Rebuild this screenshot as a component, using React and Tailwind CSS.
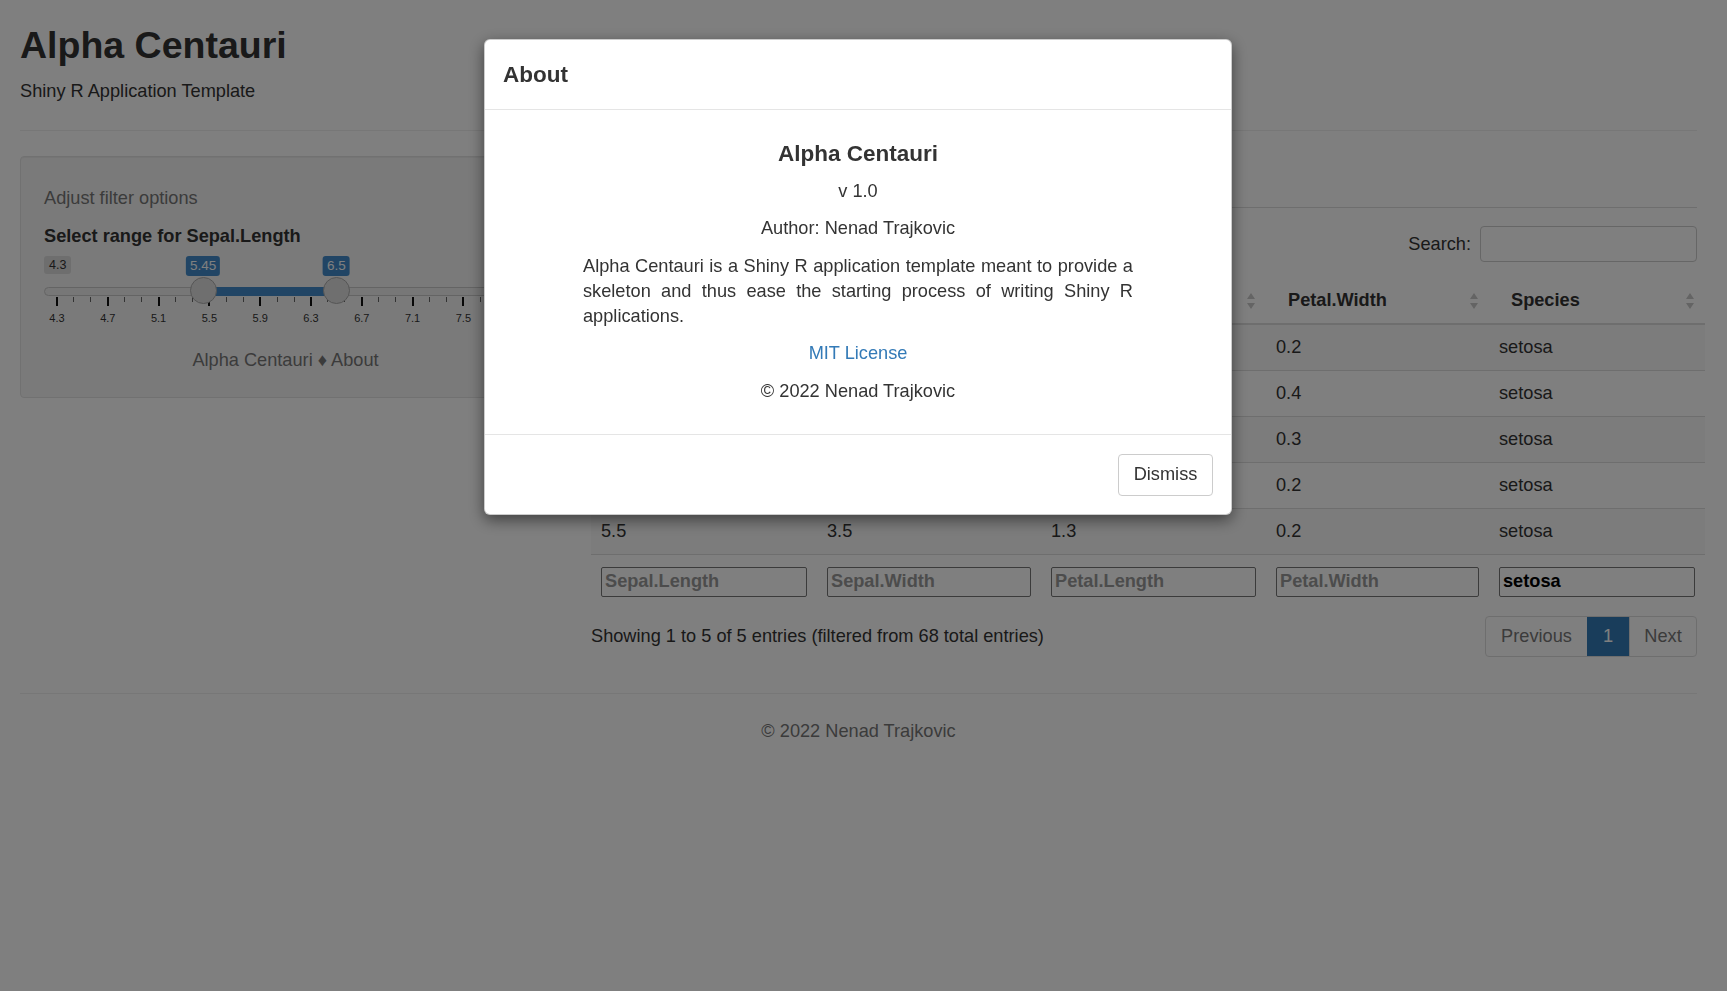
const rows = [
    ["5.8", "4.0", "1.2", "0.2", "setosa"],
    ["5.7", "4.4", "1.5", "0.4", "setosa"],
    ["5.7", "3.8", "1.7", "0.3", "setosa"],
    ["5.5", "4.2", "1.4", "0.2", "setosa"],
    ["5.5", "3.5", "1.3", "0.2", "setosa"],
];

const columns = [
    { name: "Sepal.Length", width: "w-[226px]" },
    { name: "Sepal.Width", width: "w-[224px]" },
    { name: "Petal.Length", width: "w-[225px]" },
    { name: "Petal.Width", width: "w-[223px]" },
    { name: "Species", width: "w-[216px]" },
];

// slider scale: 4.3 sits 13px in, 127px per unit
const MIN = 4.3;
const pos = (v) => 13 + (v - MIN) * 127;
const range = [5.45, 6.5];
const gridLabels = ["4.3", "4.7", "5.1", "5.5", "5.9", "6.3", "6.7", "7.1", "7.5", "7.9"];
const ticks = Array.from({ length: 28 }, (_, i) => ({ x: pos(MIN + (i * 0.4) / 3), major: i % 3 === 0 }));

function SortIcon() {
    return (
        <svg width="10" height="20" viewBox="0 0 10 20" className="shrink-0">
            <path d="M5 2 L9 8 L1 8 Z" fill="#c8c8c8" />
            <path d="M5 18 L9 12 L1 12 Z" fill="#c8c8c8" />
        </svg>
    );
}

function RangeSlider() {
    return (
        <div className="relative h-[80px] mt-[2px]">
            <span className="absolute left-0 top-[5px] h-[18px] px-[5px] rounded-[3px] bg-[#dcdcdc] text-[12.5px] leading-[18px] text-[#333]">4.3</span>
            {range.map((v) => (
                <span key={v} className="absolute top-[5px] -translate-x-1/2 h-[20px] px-[4px] rounded-[3px] bg-[#428bca] text-white text-[13.5px] leading-[20px]" style={{ left: pos(v) }}>
                    {v}
                </span>
            ))}
            <div className="absolute left-0 right-0 top-[36px] h-[9px] rounded-full bg-[#eeeeee] border border-[#c8c8c8]" />
            <div className="absolute top-[36px] h-[9px] bg-[#428bca]" style={{ left: pos(range[0]), width: pos(range[1]) - pos(range[0]) }} />
            {ticks.map((t, i) => (
                <div key={i} className={t.major ? "absolute top-[46px] w-[2px] h-[9px] bg-[#111]" : "absolute top-[46px] w-[1px] h-[5px] bg-[#666]"} style={{ left: t.x - (t.major ? 1 : 0.5) }} />
            ))}
            {gridLabels.map((l, i) => (
                <span key={l} className="absolute top-[60px] -translate-x-1/2 text-[11px] leading-[14px] text-[#333]" style={{ left: pos(MIN + i * 0.4) }}>
                    {l}
                </span>
            ))}
            {range.map((v) => (
                <div key={v} className="absolute top-[26px] w-[27px] h-[27px] rounded-full bg-[#dedede] border border-[#ababab]" style={{ left: pos(v) - 13.5 }} />
            ))}
        </div>
    );
}

function DataTable() {
    return (
        <div>
            <div className="flex justify-end items-center gap-[9px] mt-[18px]">
                <span>Search:</span>
                <input className="w-[217px] h-[36px] border border-[#ccc] rounded-[4px] bg-white" />
            </div>

            <table className="table-fixed border-collapse w-[1114px] mt-[16px] text-left">
                <colgroup>
                    {columns.map((c) => (
                        <col key={c.name} className={c.width} />
                    ))}
                </colgroup>
                <thead>
                    <tr className="h-[46px] border-b-2 border-[#ddd]">
                        {columns.map((c) => (
                            <th key={c.name} className="pl-[22px] pr-[10px] font-bold">
                                <div className="flex items-center justify-between">
                                    <span>{c.name}</span>
                                    <SortIcon />
                                </div>
                            </th>
                        ))}
                    </tr>
                </thead>
                <tbody>
                    {rows.map((row, i) => (
                        <tr key={i} className={i % 2 === 0 ? "h-[46px] border-t border-[#ddd] bg-[#f9f9f9]" : "h-[46px] border-t border-[#ddd]"}>
                            {row.map((cell, j) => (
                                <td key={j} className="px-[10px]">{cell}</td>
                            ))}
                        </tr>
                    ))}
                </tbody>
                <tfoot>
                    <tr className="border-t border-[#ddd]">
                        {columns.map((c) => (
                            <td key={c.name} className="px-[10px] pt-[12px] pb-[10px]">
                                {c.name === "Species" ? (
                                    <input defaultValue="setosa" className="w-full h-[30px] border border-[#777] rounded-[2px] pl-[3px] font-bold text-black bg-white" />
                                ) : (
                                    <input placeholder={c.name} className="w-full h-[30px] border border-[#777] rounded-[2px] pl-[3px] font-bold placeholder:text-[#999] bg-white" />
                                )}
                            </td>
                        ))}
                    </tr>
                </tfoot>
            </table>

            <div className="flex justify-between items-center mt-[9px]">
                <span>Showing 1 to 5 of 5 entries (filtered from 68 total entries)</span>
                <div className="flex h-[41px] border border-[#ddd] rounded-[4px] overflow-hidden text-[#777]">
                    <span className="w-[101px] flex items-center justify-center">Previous</span>
                    <span className="w-[42px] flex items-center justify-center bg-[#337ab7] text-white">1</span>
                    <span className="w-[67px] flex items-center justify-center border-l border-[#ddd]">Next</span>
                </div>
            </div>
        </div>
    );
}

function AboutModal() {
    return (
        <div className="fixed left-[484px] top-[39px] w-[748px] bg-white rounded-[6px] border border-black/20 shadow-[0_5px_15px_rgba(0,0,0,0.5)] text-[#333] z-20">
            <div className="h-[70px] px-[18px] flex items-center border-b border-[#e5e5e5]">
                <h4 className="text-[22.5px] font-bold">About</h4>
            </div>
            <div className="flex flex-col items-center gap-[12.5px] pt-[31px] pb-[30px]">
                <h4 className="text-[22.5px] leading-[25px] font-bold">Alpha Centauri</h4>
                <p>v 1.0</p>
                <p>Author: Nenad Trajkovic</p>
                <p className="w-[550px] text-justify">
                    Alpha Centauri is a Shiny R application template meant to provide a skeleton and thus ease the starting process of writing Shiny R applications.
                </p>
                <a className="text-[#337ab7]">MIT License</a>
                <p>© 2022 Nenad Trajkovic</p>
            </div>
            <div className="flex justify-end border-t border-[#e5e5e5] pt-[19px] pb-[18px] pr-[18px]">
                <button className="w-[95px] h-[42px] border border-[#ccc] rounded-[4px] bg-white">Dismiss</button>
            </div>
        </div>
    );
}

export default function App() {
    return (
        <div className="min-h-screen bg-white font-['Liberation_Sans',Arial,sans-serif] text-[18.2px] leading-[25px] text-[#333]">
            <div className="pl-[20px] pr-[30px] pt-[25px]">
                <h1 className="text-[37.5px] leading-[41px] font-bold">Alpha Centauri</h1>
                <p className="mt-[13px]">Shiny R Application Template</p>
                <hr className="mt-[26px] border-[#eee]" />

                <div className="grid grid-cols-[531px_minmax(0,1fr)] gap-[40px]">
                    <div className="mt-[25px] self-start bg-[#f5f5f5] border border-[#e3e3e3] rounded-[4px] shadow-[inset_0_1px_1px_rgba(0,0,0,0.05)] px-[23px] pt-[29px] pb-[24px]">
                        <p className="text-[#777]">Adjust filter options</p>
                        <p className="mt-[13px] font-bold">Select range for Sepal.Length</p>
                        <RangeSlider />
                        <p className="mt-[17px] text-center text-[#777]">Alpha Centauri ♦ About</p>
                    </div>

                    <div className="pt-[25px]">
                        <div className="h-[52px] border-b border-[#ddd]" />
                        <DataTable />
                    </div>
                </div>

                <hr className="mt-[36px] border-[#eee]" />
                <p className="mt-[25px] text-center text-[#777]">© 2022 Nenad Trajkovic</p>
            </div>

            <div className="fixed inset-0 bg-black/50 z-10" />
            <AboutModal />
        </div>
    );
}
